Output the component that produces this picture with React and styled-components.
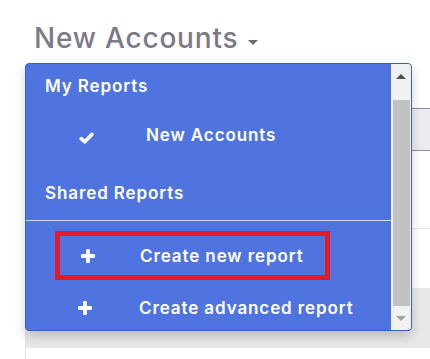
import React from "react";
import styled, { createGlobalStyle } from "styled-components";

const GlobalStyle = createGlobalStyle`
  html, body {
    margin: 0;
    padding: 0;
    background: #ffffff;
    font-family: "Inter", "Open Sans", sans-serif;
  }
`;

const Page = styled.div`
  position: relative;
  width: 430px;
  height: 359px;
  overflow: hidden;
`;

const TitleBar = styled.div`
  display: flex;
  align-items: center;
  gap: 10px;
  height: 76px;
  padding-left: 34px;
  box-sizing: border-box;
`;

const Title = styled.h1`
  margin: 0;
  font-size: 28px;
  font-weight: 500;
  color: #7c7a86;
  letter-spacing: 0.8px;
`;

const Caret = styled.span`
  width: 0;
  height: 0;
  margin-top: 8px;
  border-top: 5px solid #6e6c78;
  border-left: 5px solid transparent;
  border-right: 5px solid transparent;
`;

const Table = styled.div`
  margin-left: 25px;
  border-left: 1px solid #e4e4e8;
  display: flex;
  flex-direction: column;
`;

const TableRow = styled.div`
  height: ${(p) => p.$h}px;
  background: ${(p) => p.$bg || "transparent"};
  border-top: ${(p) => p.$top || "none"};
  border-bottom: ${(p) => p.$bottom || "none"};
`;

const Menu = styled.div`
  position: absolute;
  top: 63px;
  left: 25px;
  width: 387px;
  height: 268px;
  box-sizing: border-box;
  display: flex;
  background: #4f74df;
  border: 1px solid #3b5fca;
  border-radius: 4px;
  box-shadow: 0 6px 12px rgba(0, 0, 0, 0.18);
  overflow: hidden;
`;

const List = styled.div`
  flex: 1;
  display: flex;
  flex-direction: column;
  color: #ffffff;
  font-size: 17px;
  font-weight: 600;
  letter-spacing: 0.9px;
`;

const Header = styled.div`
  display: flex;
  align-items: center;
  height: ${(p) => p.$h}px;
  box-sizing: border-box;
  padding-left: 19px;
  padding-top: ${(p) => p.$pt || 0}px;
`;

const Divider = styled.div`
  height: 1px;
  background: rgba(255, 255, 255, 0.75);
  margin-bottom: 10px;
`;

const Item = styled.div`
  display: flex;
  align-items: center;
  height: ${(p) => p.$h || 50}px;
  box-sizing: border-box;
  width: ${(p) => (p.$active ? "275px" : "auto")};
  margin-left: ${(p) => (p.$active ? "29px" : "0")};
  padding-left: ${(p) => (p.$active ? "0" : "29px")};
  padding-top: ${(p) => p.$pt || 0}px;
  border: ${(p) => (p.$active ? "5px solid #e8182c" : "none")};
`;

const IconSlot = styled.span`
  display: flex;
  justify-content: center;
  align-items: center;
  width: ${(p) => p.$w}px;
  flex: none;
  padding-top: ${(p) => p.$dy || 0}px;
`;

const Label = styled.span`
  margin-left: ${(p) => p.$ml}px;
`;

const Scrollbar = styled.div`
  width: 20px;
  flex: none;
  background: #f1f1f1;
  display: flex;
  flex-direction: column;
  align-items: center;
`;

const ArrowBox = styled.div`
  height: 24px;
  width: 100%;
  display: flex;
  align-items: center;
  justify-content: center;
`;

const Arrow = styled.span`
  width: 0;
  height: 0;
  border-left: 5px solid transparent;
  border-right: 5px solid transparent;
  ${(p) =>
    p.$up
      ? "border-bottom: 5px solid #505050;"
      : "border-top: 5px solid #a3a3a3;"}
`;

const Thumb = styled.div`
  flex: 1;
  width: 17px;
  background: #c1c1c1;
  margin-top: 12px;
`;

function Check() {
  return (
    <svg width="15" height="12" viewBox="0 0 15 12">
      <path
        d="M2.2 6.6 L5.8 9.8 L12.8 2.4"
        fill="none"
        stroke="#fff"
        strokeWidth="3.6"
        strokeLinecap="round"
        strokeLinejoin="round"
      />
    </svg>
  );
}

function Plus() {
  return (
    <svg width="14" height="14" viewBox="0 0 14 14">
      <path
        d="M7 1.6 V12.4 M1.6 7 H12.4"
        fill="none"
        stroke="#fff"
        strokeWidth="3.8"
        strokeLinecap="round"
      />
    </svg>
  );
}

export default function App() {
  return (
    <Page>
      <GlobalStyle />
      <TitleBar>
        <Title>New Accounts</Title>
        <Caret />
      </TitleBar>
      <Table>
        <TableRow $h={32} />
        <TableRow
          $h={41}
          $bg="#ececf0"
          $top="1px solid #8a8d9c"
          $bottom="1px solid #8a8d9c"
        />
        <TableRow $h={77} $bottom="1px solid #e6e6e6" />
        <TableRow $h={59} />
        <TableRow $h={60} $bg="#e8e8e8" />
        <TableRow $h={40} />
      </Table>
      <Menu>
        <List>
          <Header $h={44}>My Reports</Header>
          <Item $h={56}>
            <IconSlot $w={62} $dy={5}>
              <Check />
            </IconSlot>
            <Label $ml={29}>New Accounts</Label>
          </Item>
          <Header $h={57} $pt={4}>Shared Reports</Header>
          <Divider />
          <Item $active $pt={1}>
            <IconSlot $w={56}>
              <Plus />
            </IconSlot>
            <Label $ml={24}>Create new report</Label>
          </Item>
          <Item $pt={5}>
            <IconSlot $w={60}>
              <Plus />
            </IconSlot>
            <Label $ml={24}>Create advanced report</Label>
          </Item>
        </List>
        <Scrollbar>
          <ArrowBox>
            <Arrow $up />
          </ArrowBox>
          <Thumb />
          <ArrowBox>
            <Arrow />
          </ArrowBox>
        </Scrollbar>
      </Menu>
    </Page>
  );
}
